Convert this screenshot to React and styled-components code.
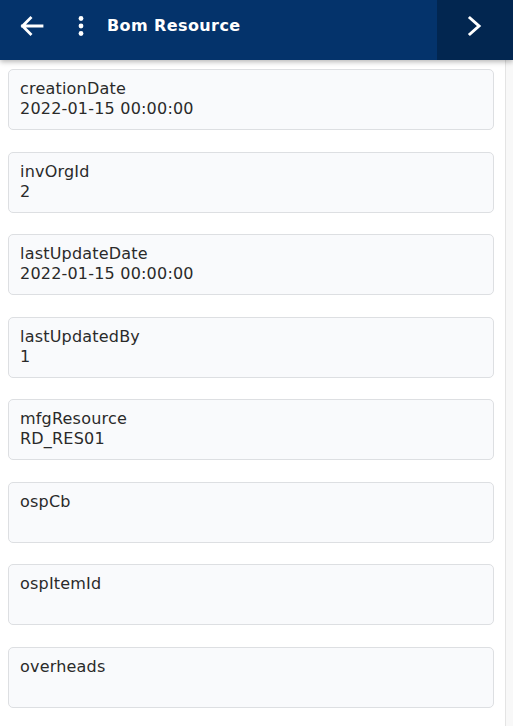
import * as React from 'react';
import styled, { createGlobalStyle } from 'styled-components';

const GlobalStyle = createGlobalStyle`
    html, body {
        margin: 0;
        padding: 0;
        height: 100%;
        background: #ffffff;
        font-family: 'DejaVu Sans', 'Liberation Sans', sans-serif;
    }
    #root {
        height: 100%;
    }
`;

const fields = [
    { name: 'creationDate', value: '2022-01-15 00:00:00' },
    { name: 'invOrgId', value: '2' },
    { name: 'lastUpdateDate', value: '2022-01-15 00:00:00' },
    { name: 'lastUpdatedBy', value: '1' },
    { name: 'mfgResource', value: 'RD_RES01' },
    { name: 'ospCb', value: '' },
    { name: 'ospItemId', value: '' },
    { name: 'overheads', value: '' }
];

export default function App() {
    return (
        <Page>
            <GlobalStyle />
            <Header>
                <IconButton $width={62} aria-label="back">
                    <svg width="24" height="20" viewBox="0 0 24 20">
                        <path d="M10.5 2 L2.5 10 L10.5 18 M2.5 10 H22" fill="none" stroke="#fff" strokeWidth="2.8" strokeLinecap="square" strokeLinejoin="miter" />
                    </svg>
                </IconButton>
                <IconButton $width={37} aria-label="menu">
                    <svg width="6" height="22" viewBox="0 0 6 22">
                        <circle cx="3" cy="3.5" r="2.4" fill="#fff" />
                        <circle cx="3" cy="11" r="2.4" fill="#fff" />
                        <circle cx="3" cy="18.5" r="2.4" fill="#fff" />
                    </svg>
                </IconButton>
                <Title>Bom Resource</Title>
                <NextButton aria-label="next">
                    <svg width="16" height="22" viewBox="0 0 16 22">
                        <path d="M3 3 L12 11 L3 19" fill="none" stroke="#fff" strokeWidth="3" strokeLinecap="square" />
                    </svg>
                </NextButton>
            </Header>
            <Body>
                <FieldList>
                    {fields.map(f => (
                        <FieldCard key={f.name}>
                            <FieldName>{f.name}</FieldName>
                            <FieldValue>{f.value}</FieldValue>
                        </FieldCard>
                    ))}
                </FieldList>
                <ScrollTrack />
            </Body>
        </Page>
    );
}

const Page = styled.div`
    height: 100vh;
    display: flex;
    flex-direction: column;
    overflow: hidden;
`;

const Header = styled.header`
    flex: 0 0 60px;
    height: 60px;
    display: flex;
    align-items: stretch;
    background: #04336b;
    box-shadow: 0 2px 5px rgba(0, 0, 0, 0.28);
    position: relative;
    z-index: 2;
`;

const IconButton = styled.button`
    box-sizing: border-box;
    width: ${p => p.$width}px;
    padding: 0 0 9px 0;
    border: none;
    background: transparent;
    display: flex;
    align-items: center;
    justify-content: center;

    &:first-child {
        padding-left: 2px;
    }
`;

const Title = styled.h1`
    flex: 1;
    display: flex;
    align-items: center;
    margin: 0 0 0 8px;
    padding-bottom: 8px;
    color: #ffffff;
    font-family: 'DejaVu Sans', 'Liberation Sans', sans-serif;
    font-weight: bold;
    font-size: 16px;
    letter-spacing: 0.4px;
    line-height: 20px;
`;

const NextButton = styled.button`
    box-sizing: border-box;
    width: 76px;
    padding: 0 0 9px 0;
    border: none;
    background: #022650;
    display: flex;
    align-items: center;
    justify-content: center;
`;

const Body = styled.main`
    flex: 1;
    display: flex;
    min-height: 0;
`;

const FieldList = styled.div`
    flex: 1;
    display: flex;
    flex-direction: column;
    gap: 21.5px;
    padding: 9px 11px 0 8px;
    overflow: hidden;
`;

const ScrollTrack = styled.div`
    flex: 0 0 8px;
    box-sizing: border-box;
    border-left: 1px solid #e4e4e4;
    background: #f8f8f8;
`;

const FieldCard = styled.div`
    flex: 0 0 auto;
    box-sizing: border-box;
    height: 61px;
    padding: 9px 10px 10px 11px;
    border: 1px solid #dddfe2;
    border-radius: 5px;
    background: #f9fafc;
    color: #2a2a2a;
    font-family: 'DejaVu Sans', 'Liberation Sans', sans-serif;
    font-size: 16px;
    letter-spacing: 0.2px;
    line-height: 20px;
`;

const FieldName = styled.div`
    height: 20px;
    white-space: nowrap;
`;

const FieldValue = styled.div`
    height: 20px;
    white-space: nowrap;
`;
